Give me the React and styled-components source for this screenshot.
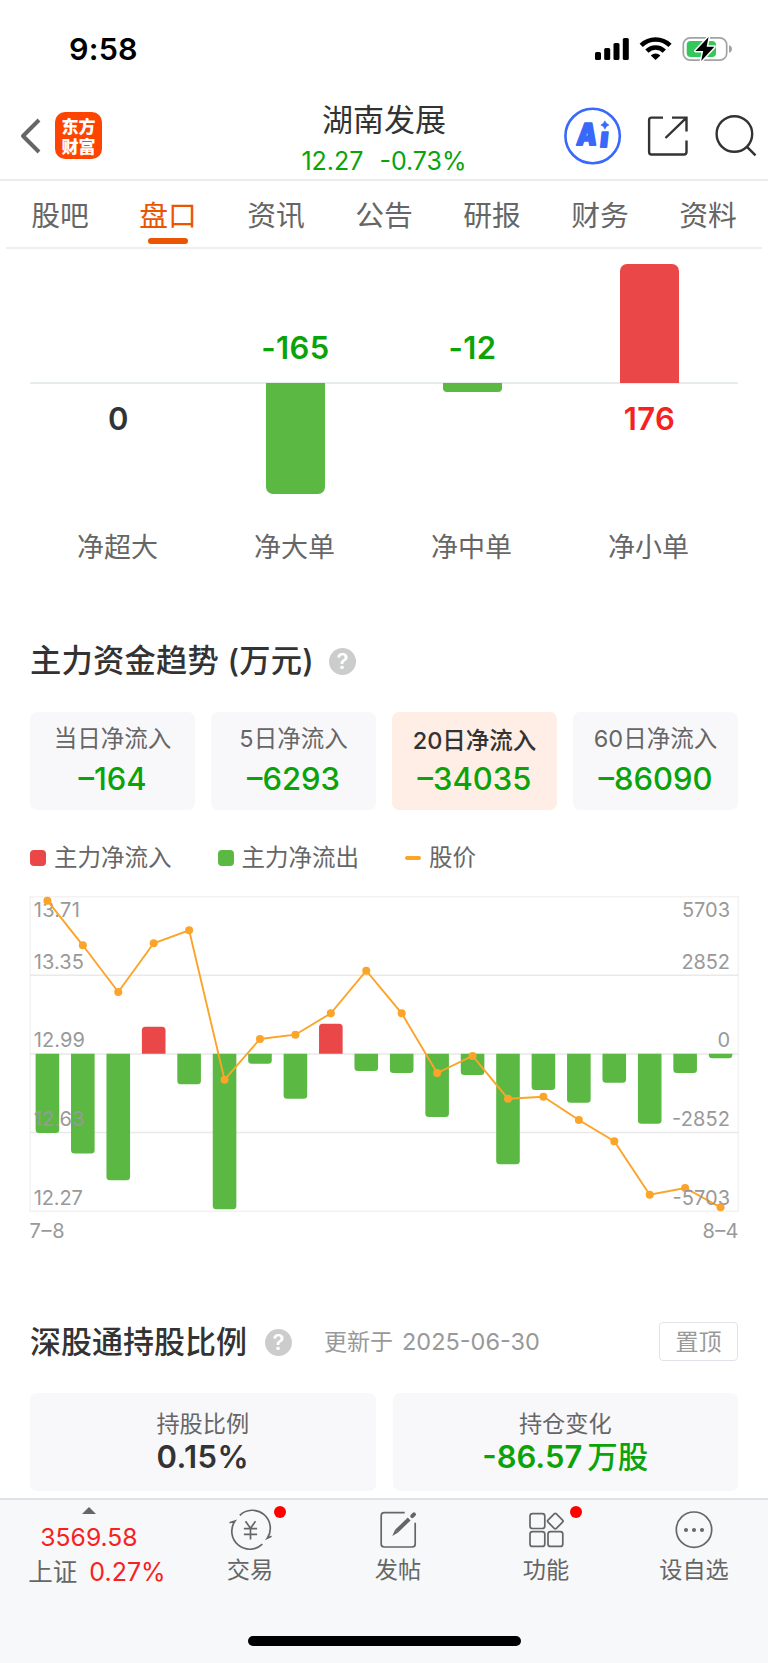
import React from "react";
import styled, { createGlobalStyle } from "styled-components";

const GREEN = "#0aa30a";
const RED = "#f72121";
const BAR_GREEN = "#5bb843";
const BAR_RED = "#ea4749";
const ORANGE = "#fba429";

const GlobalStyle = createGlobalStyle`
  * { box-sizing: border-box; }
  body {
    margin: 0;
    background: #fff;
    color: #333;
    font-family: Inter, "Noto Sans CJK SC", sans-serif;
  }
`;

const Screen = styled.div`
  width: 768px;
  height: 1663px;
  overflow: hidden;
  display: flex;
  flex-direction: column;
  background: #fff;
`;

const Label = styled.span`
  display: block;
  white-space: pre;
  font-size: ${(p) => p.$size}px;
  line-height: ${(p) => p.$line || 32}px;
  font-weight: ${(p) => p.$weight || 400};
  color: ${(p) => p.$color || "#333"};
  letter-spacing: ${(p) => p.$track || 0}px;
`;

/* ---------- status bar ---------- */
const StatusBar = styled.header`
  flex: none;
  height: 98px;
  padding: 0 35px 0 69px;
  display: flex;
  justify-content: space-between;
  align-items: center;
`;

/* ---------- navigation bar ---------- */
const NavBar = styled.div`
  flex: none;
  height: 83px;
  border-bottom: 2px solid #ececec;
  display: grid;
  grid-template-columns: 1fr 200px 1fr;
`;
const NavLeft = styled.div`
  display: flex;
  align-items: center;
  gap: 14px;
  padding: 0 0 6px 20px;
`;
const NavRight = styled.div`
  display: flex;
  align-items: center;
  justify-content: flex-end;
  padding: 0 11px 5px 0;
`;
const AppLogo = styled.div`
  width: 47px;
  height: 47px;
  border-radius: 10px;
  background: #ff4400;
  color: #fff;
  font: 900 17px/19.5px "Noto Sans CJK SC", sans-serif;
  text-align: center;
  padding-top: 4px;
`;
const StockTitle = styled.div`
  display: flex;
  flex-direction: column;
  align-items: center;
  padding-top: 3px;
`;
const Quote = styled.div`
  display: flex;
  gap: 16px;
  margin-top: 7px;
`;

/* ---------- tabs ---------- */
const Tabs = styled.nav`
  flex: none;
  height: 68px;
  margin: 0 6px;
  border-bottom: 2px solid #eee;
  display: grid;
  grid-template-columns: repeat(7, 1fr);
`;
const Tab = styled.div`
  display: flex;
  flex-direction: column;
  align-items: center;
  padding-top: 18px;
  font-size: 28.8px;
  line-height: 34px;
  color: ${(p) => (p.$active ? "#ea5504" : "#666")};
`;
const TabMark = styled.i`
  width: 40px;
  height: 6px;
  margin-top: 5px;
  border-radius: 3px;
  background: #ea5504;
`;

/* ---------- order size bars ---------- */
const OrderChart = styled.section`
  flex: none;
  height: 378px;
  padding: 0 30px;
  display: grid;
  grid-template-columns: repeat(4, 1fr);
`;
const OrderColumn = styled.div`
  display: grid;
  grid-template-rows: 135px 127px auto;
  justify-items: center;
`;
const UpperHalf = styled.div`
  width: 100%;
  border-bottom: 2px solid #e6ebee;
  display: flex;
  flex-direction: column;
  justify-content: flex-end;
  align-items: center;
  padding-bottom: ${(p) => (p.$text ? 18 : 0)}px;
`;
const LowerHalf = styled.div`
  display: flex;
  flex-direction: column;
  align-items: center;
  padding-top: ${(p) => (p.$text ? 19 : 0)}px;
`;
const OrderBar = styled.div`
  width: 59px;
  flex: none;
  position: relative;
  ${(p) => (p.$up ? "margin-bottom: -1px;" : "margin-top: -1px;")}
  border-radius: ${(p) => (p.$up ? "7px 7px 0 0" : p.$small ? "0 0 4px 4px" : "0 0 7px 7px")};
  background: ${(p) => (p.$up ? BAR_RED : BAR_GREEN)};
`;
const OrderName = styled.div`
  padding: 21px 2px 0 0;
`;

/* ---------- sections ---------- */
const SectionHead = styled.div`
  flex: none;
  height: 40px;
  margin: ${(p) => p.$top}px 30px 0;
  display: flex;
  align-items: center;
`;
const HelpMark = styled.span`
  width: 27px;
  height: 27px;
  margin-left: ${(p) => p.$left}px;
  border-radius: 50%;
  background: #ccc;
  color: #fff;
  font-size: 22px;
  font-weight: 600;
  line-height: 27px;
  text-align: center;
`;
const PinButton = styled.button`
  width: 79px;
  height: 39px;
  margin: -1px 0 0 auto;
  padding: 0 0 3px;
  border: 1.5px solid #e1e3ea;
  border-radius: 4px;
  background: #fff;
  color: #999;
  font: 400 23px/32px "Noto Sans CJK SC", sans-serif;
`;
const UpdatedAt = styled.div`
  display: flex;
  align-items: center;
  gap: 9px;
  margin-left: 32px;
`;
const Cards = styled.div`
  flex: none;
  height: 98px;
  margin: ${(p) => p.$top}px 30px 0;
  display: grid;
  grid-template-columns: repeat(${(p) => p.$cols}, 1fr);
  gap: ${(p) => p.$gap}px;
`;
const Card = styled.div`
  border-radius: 7px;
  background: ${(p) => (p.$active ? "#feeee6" : "#f8f8fb")};
  display: flex;
  flex-direction: column;
  align-items: center;
  padding-top: ${(p) => p.$pad}px;
`;
const CardValue = styled.div`
  display: flex;
  gap: 5px;
  margin-top: ${(p) => p.$top}px;
`;

/* ---------- trend chart ---------- */
const Legend = styled.div`
  flex: none;
  height: 32px;
  margin: 32px 30px 16px;
  display: flex;
  align-items: center;
  gap: 46px;
`;
const LegendItem = styled.div`
  display: flex;
  align-items: center;
  gap: 8px;
`;
const Swatch = styled.i`
  width: 16px;
  height: ${(p) => (p.$line ? 4 : 16)}px;
  border-radius: ${(p) => (p.$line ? 2 : 4)}px;
  background: ${(p) => p.$color};
`;
const TrendSvg = styled.svg`
  flex: none;
  display: block;
  width: 768px;
  height: 360px;
`;

/* ---------- bottom bar ---------- */
const BottomBar = styled.footer`
  flex: none;
  height: 165px;
  margin-top: 7px;
  border-top: 2px solid #dfe1e5;
  background: #f7f8fa;
  display: flex;
  flex-direction: column;
  align-items: center;
`;
const BottomItems = styled.div`
  width: 768px;
  height: 136px;
  display: grid;
  grid-template-columns: 176px repeat(4, 1fr);
`;
const IndexCell = styled.div`
  display: flex;
  flex-direction: column;
  align-items: center;
  padding: 7px 0 0 2px;
`;
const IndexPrice = styled.div`
  margin-top: 7px;
`;
const IndexRow = styled.div`
  display: flex;
  gap: 12px;
  margin: 3px 0 0 16px;
`;
const BottomItem = styled.div`
  display: flex;
  flex-direction: column;
  align-items: center;
  padding-top: 8px;
`;
const IconBox = styled.div`
  position: relative;
  width: 44px;
  height: 44px;
  margin-bottom: 2px;
`;
const Badge = styled.i`
  position: absolute;
  left: 46px;
  top: -2px;
  width: 12px;
  height: 12px;
  border-radius: 50%;
  background: #f00;
`;
const HomeIndicator = styled.div`
  width: 273px;
  height: 10px;
  border-radius: 5px;
  background: #000;
`;

const StatusIcons = () => (
  <svg width="140" height="30" viewBox="593 34 140 30">
    <rect x="595" y="52" width="6" height="8" rx="1.6" />
    <rect x="604.2" y="48" width="6" height="12" rx="1.6" />
    <rect x="613.5" y="43" width="6" height="17" rx="1.6" />
    <rect x="622.8" y="38" width="6" height="22" rx="1.6" />
    <g fill="none" stroke="#000" strokeWidth="4.6">
      <path d="M641.2 45.4a20.6 20.6 0 0 1 28.8 0" />
      <path d="M646.9 51.1a12.4 12.4 0 0 1 17.4 0" />
    </g>
    <path d="M655.6 60l-4.8-4.6a7 7 0 0 1 9.6 0z" />
    <rect x="683.3" y="37.8" width="43.4" height="22.4" rx="7" fill="#fff" stroke="#a3a3a3" strokeWidth="1.7" />
    <path d="M729 45.2q3 1 3 3.8t-3 3.8z" fill="#a3a3a3" />
    <rect x="686.7" y="41" width="29.3" height="16" rx="4" fill="#34c759" />
    <path d="M708.6 37L695.4 51h7.8l-2 10L714.4 46.7h-7.8z" stroke="#fff" strokeWidth="3" paintOrder="stroke" strokeLinejoin="round" />
  </svg>
);

const BackIcon = () => (
  <svg width="21" height="36" viewBox="0 0 21 36" fill="none" stroke="#666" strokeWidth="4" strokeLinejoin="round">
    <path d="M19 2L3 18l16 16" />
  </svg>
);

const NavIcons = () => (
  <svg width="194" height="60" viewBox="563 106 194 60" fill="none" stroke="#333" strokeWidth="2.4">
    <circle cx="592.6" cy="136" r="27.2" stroke="#3869fa" strokeWidth="2.6" />
    <g fill="#3869fa" stroke="#3869fa" strokeWidth="2" strokeLinejoin="round" fontFamily="Inter" fontWeight="900">
      <text x="576" y="145.5" fontSize="30" textLength="20" lengthAdjust="spacingAndGlyphs" transform="skewX(-6)" style={{ transformOrigin: "585px 146px" }}>A</text>
      <text x="599.5" y="147" fontSize="27" transform="skewX(-6)" style={{ transformOrigin: "604px 146px" }}>ı</text>
      <path strokeWidth=".5" d="M604.9 120.8q1 3.2 4.1 4.2q-3.1 1-4.1 4.2q-1-3.2-4.1-4.2q3.1-1 4.1-4.2z" />
    </g>
    <path d="M663 117.6H651.5q-2.4 0-2.4 2.4V152q0 2.5 2.4 2.5H684q2.5 0 2.5-2.5V140.5M672 117.6H686.5V131.5M686.3 117.8L665.5 138" />
    <circle cx="734.4" cy="134" r="17.8" />
    <path d="M747 146.8l8.5 8.5" />
  </svg>
);

const TradeIcon = () => (
  <svg width="44" height="44" viewBox="228.5 1508 44 44" fill="none" stroke="#666" strokeWidth="1.7">
    <path d="M240.3 1515.3A18 18 0 0 1 267.8 1538.2L272 1536.2M262.8 1544.2A18 18 0 0 1 235.5 1521L230 1522.8" />
    <path d="M246 1521.3l5 7 5-7M251 1528.3v11.2M244.4 1528.6h13.2M244.4 1534.4h13.2" />
  </svg>
);
const PostIcon = () => (
  <svg width="44" height="44" viewBox="376.8 1508 44 44" fill="none" stroke="#666" strokeWidth="1.7">
    <path d="M405.5 1512.7H385q-3 0-3 3V1544q0 3 3 3H413q3 0 3-3V1522.8" />
    <path d="M410 1519L397.5 1531" strokeWidth="4" />
    <path d="M396 1529.5l3 3-6 3.5z" fill="#666" stroke="none" />
    <path d="M413 1516.2L414.8 1514.4" strokeWidth="4" strokeLinecap="round" />
  </svg>
);
const GridIcon = () => (
  <svg width="44" height="44" viewBox="524 1508 44 44" fill="none" stroke="#666" strokeWidth="1.7">
    <rect x="530" y="1513.7" width="14.8" height="14.8" rx="2.5" />
    <rect x="530" y="1531.6" width="14.8" height="14.8" rx="2.5" />
    <rect x="548" y="1531.6" width="14.8" height="14.8" rx="2.5" />
    <rect x="549.4" y="1515.2" width="11.8" height="11.8" rx="1.5" transform="rotate(45 555.3 1521.1)" />
  </svg>
);
const MoreIcon = () => (
  <svg width="44" height="44" viewBox="672 1508 44 44" fill="none" stroke="#666" strokeWidth="1.7">
    <circle cx="694" cy="1529.7" r="17.7" />
    {[686, 694, 702].map((x) => (
      <circle key={x} cx={x} cy="1530" r="2" fill="#666" stroke="none" />
    ))}
  </svg>
);

const orders = [
  { name: "净超大", value: 0 },
  { name: "净大单", value: -165, height: 111 },
  { name: "净中单", value: -12, height: 9 },
  { name: "净小单", value: 176, height: 119 },
];

const flows = [
  { name: "当日净流入", value: "–164" },
  { name: "5日净流入", value: "–6293" },
  { name: "20日净流入", value: "–34035", active: true },
  { name: "60日净流入", value: "–86090" },
];

/* bar ends and price points, as y offsets inside the trend chart */
const ZERO = 163.7;
const barEnds = [243, 263.4, 290.3, 136.7, 194.3, 319.3, 173.7, 208.7, 133.7, 181, 183, 227, 185, 274.3, 200, 212.7, 192.7, 233.7, 183, 168.3];
const prices = [10.7, 55.3, 102, 53.3, 40.3, 189.7, 149, 144.7, 123.3, 80.7, 123.3, 183, 166, 208.7, 206.7, 230, 251.3, 304.7, 298, 317.3];
const labelY = [27.4, 78.6, 157.4, 236, 314.8];
const centerX = (i) => 47.4 + i * 35.43;

const roundedBar = (i, end) => {
  const x = centerX(i) - 11.8;
  const w = 23.6;
  const r = end > ZERO ? 3.5 : -3.5;
  return `M${x} ${ZERO}V${end - r}Q${x} ${end} ${x + 3.5} ${end}H${x + w - 3.5}Q${x + w} ${end} ${x + w} ${end - r}V${ZERO}Z`;
};

const TrendChart = () => (
  <TrendSvg viewBox="0 0 768 360">
    <g fill="none" strokeWidth="1.5">
      <rect x="30.3" y="6.7" width="708" height="314.5" stroke="#f2f2f2" />
      <path d="M30 85.2H738.5M30 163.9H738.5M30 242.6H738.5" stroke="#e9e9e9" />
    </g>
    {barEnds.map((end, i) => (
      <path key={i} d={roundedBar(i, end)} fill={end > ZERO ? BAR_GREEN : BAR_RED} />
    ))}
    <g fill="#999" fontFamily="Inter" fontSize="20">
      {[["13.71", 46], ["13.35", 50], ["12.99", 51], ["12.63", 50.5], ["12.27", 49]].map(([t, w], i) => (
        <text key={t} x="33.8" y={labelY[i]} textLength={w}>{t}</text>
      ))}
    </g>
    <polyline points={prices.map((y, i) => `${centerX(i)},${y}`).join(" ")} fill="none" stroke={ORANGE} strokeWidth="1.9" />
    {prices.map((y, i) => (
      <circle key={i} cx={centerX(i)} cy={y} r="4" fill={ORANGE} />
    ))}
    <g fill="#999" fontFamily="Inter" fontSize="20">
      {[["5703", 48], ["2852", 48.5], ["0", 12.5], ["-2852", 58], ["-5703", 57.5]].map(([t, w], i) => (
        <text key={t} x={730 - w} y={labelY[i]} textLength={w}>{t}</text>
      ))}
      <text x="29.5" y="348.2" textLength="35">7–8</text>
      <text x="702.5" y="348.2" textLength="36">8–4</text>
    </g>
  </TrendSvg>
);

export default function App() {
  return (
    <Screen>
      <GlobalStyle />
      <StatusBar>
        <Label $size={30.5} $weight={600} $color="#000" $track={0.2}>9:58</Label>
        <StatusIcons />
      </StatusBar>
      <NavBar>
        <NavLeft>
          <BackIcon />
          <AppLogo>东方<br />财富</AppLogo>
        </NavLeft>
        <StockTitle>
          <Label $size={31} $line={38}>湖南发展</Label>
          <Quote>
            <Label $size={25} $line={30} $color={GREEN}>12.27</Label>
            <Label $size={25} $line={30} $color={GREEN}>-0.73%</Label>
          </Quote>
        </StockTitle>
        <NavRight><NavIcons /></NavRight>
      </NavBar>
      <Tabs>
        {["股吧", "盘口", "资讯", "公告", "研报", "财务", "资料"].map((t, i) => (
          <Tab key={t} $active={i === 1}>
            {t}
            {i === 1 && <TabMark />}
          </Tab>
        ))}
      </Tabs>

      <OrderChart>
        {orders.map(({ name, value, height }) => (
          <OrderColumn key={name}>
            <UpperHalf $text={value < 0}>
              {value < 0 && <Label $size={31} $weight={600} $color={GREEN} $track={0.4}>{value}</Label>}
              {value > 0 && <OrderBar $up style={{ height }} />}
            </UpperHalf>
            <LowerHalf $text={value >= 0}>
              {value < 0 && <OrderBar $small={height < 20} style={{ height }} />}
              {value >= 0 && <Label $size={31} $weight={600} $color={value ? RED : "#333"} $track={0.4}>{value}</Label>}
            </LowerHalf>
            <OrderName><Label $size={27} $color="#666">{name}</Label></OrderName>
          </OrderColumn>
        ))}
      </OrderChart>

      <SectionHead $top={14}>
        <Label $size={31.3} $weight={500} $track={0.2}>主力资金趋势 (万元)</Label>
        <HelpMark $left={15}>?</HelpMark>
      </SectionHead>
      <Cards $cols={4} $gap={16} $top={31}>
        {flows.map(({ name, value, active }) => (
          <Card key={name} $active={active} $pad={active ? 13 : 11}>
            <Label $size={23.5} $weight={active ? 500 : 400} $color={active ? "#333" : "#666"}>{name}</Label>
            <CardValue $top={active ? 6 : 8}>
              <Label $size={31} $weight={500} $color={GREEN}>{value}</Label>
            </CardValue>
          </Card>
        ))}
      </Cards>
      <Legend>
        <LegendItem><Swatch $color={BAR_RED} /><Label $size={23.5} $color="#666">主力净流入</Label></LegendItem>
        <LegendItem><Swatch $color={BAR_GREEN} /><Label $size={23.5} $color="#666">主力净流出</Label></LegendItem>
        <LegendItem><Swatch $line $color={ORANGE} /><Label $size={23.5} $color="#666">股价</Label></LegendItem>
      </Legend>
      <TrendChart />

      <SectionHead $top={72}>
        <Label $size={31} $weight={500}>深股通持股比例</Label>
        <HelpMark $left={18}>?</HelpMark>
        <UpdatedAt>
          <Label $size={23} $color="#999">更新于</Label>
          <Label $size={23.5} $color="#999">2025-06-30</Label>
        </UpdatedAt>
        <PinButton>置顶</PinButton>
      </SectionHead>
      <Cards $cols={2} $gap={17} $top={31}>
        <Card $pad={15}>
          <Label $size={23.2} $color="#666">持股比例</Label>
          <CardValue $top={1}><Label $size={31} $weight={600} $track={0.4}>0.15%</Label></CardValue>
        </Card>
        <Card $pad={15}>
          <Label $size={23.2} $color="#666">持仓变化</Label>
          <CardValue $top={1}>
            <Label $size={31} $weight={600} $color={GREEN}>-86.57</Label>
            <Label $size={30.5} $weight={500} $color={GREEN}>万股</Label>
          </CardValue>
        </Card>
      </Cards>

      <BottomBar>
        <BottomItems>
          <IndexCell>
            <svg width="14" height="7" viewBox="0 0 14 7"><path d="M0 7L7 0l7 7z" fill="#666" /></svg>
            <IndexPrice><Label $size={24.7} $color={RED}>3569.58</Label></IndexPrice>
            <IndexRow>
              <Label $size={24.5} $color="#666">上证</Label>
              <Label $size={25} $color={RED}>0.27%</Label>
            </IndexRow>
          </IndexCell>
          {[["交易", TradeIcon, true], ["发帖", PostIcon], ["功能", GridIcon, true], ["设自选", MoreIcon]].map(([name, Icon, dot]) => (
            <BottomItem key={name}>
              <IconBox><Icon />{dot && <Badge />}</IconBox>
              <Label $size={23.2} $color="#666">{name}</Label>
            </BottomItem>
          ))}
        </BottomItems>
        <HomeIndicator />
      </BottomBar>
    </Screen>
  );
}
